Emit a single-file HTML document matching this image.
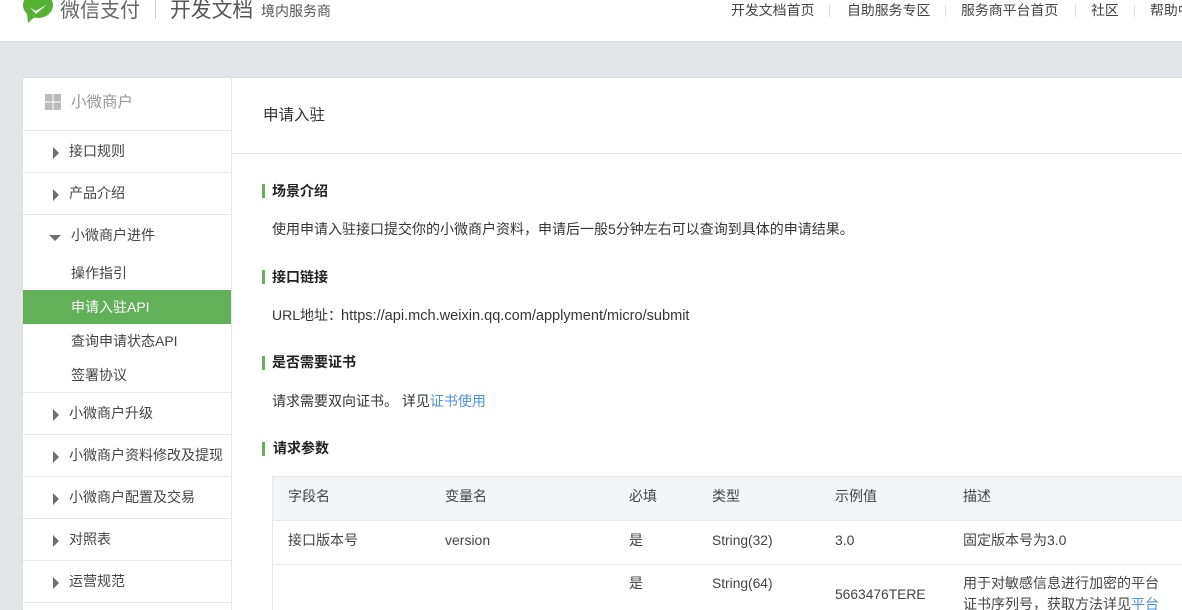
<!DOCTYPE html>
<html lang="zh-CN"><head><meta charset="utf-8"><style>
html,body{margin:0;padding:0;width:1182px;height:610px;overflow:hidden;background:#e4e5e9;}
body{position:relative;font-family:"Liberation Sans","Noto Sans CJK SC",sans-serif;color:#353535;font-size:14px;}
.t{position:absolute;white-space:nowrap;line-height:20px;height:20px;}
.b{position:absolute;}
.h{font-weight:700;color:#222;font-size:14px;}
.n{color:#444;}
.m{font-size:13.800px;}
.hl{background:#e6e7ea;height:1px;left:23px;width:208px;}
.a{position:absolute;left:53px;width:0;height:0;border-left:6px solid #6f6f6f;border-top:6px solid transparent;border-bottom:6px solid transparent;}
.g{position:absolute;left:262px;width:3px;height:14px;background:#62b159;}
a{color:#4a90e2;text-decoration:none;}
</style></head><body>
<div class="b" style="left:0;top:0;width:1182px;height:41px;background:#fff;border-bottom:1px solid #dcdde0;"></div>
<svg class="b" style="left:22px;top:0" width="32" height="24" viewBox="0 0 32 24"><ellipse cx="16" cy="5" rx="15" ry="13" fill="#55b132"/><path d="M5 14L6 23L13 16.500Z" fill="#55b132"/><path d="M8 7.500L13.500 11L25 4.500L14 14Z" fill="#fff"/></svg>
<span class="t" style="left:60px;top:-1px;font-size:20px;line-height:24px;height:24px;color:#666;">微信支付</span>
<div class="b" style="left:155px;top:0;width:1px;height:19px;background:#ccc;"></div>
<span class="t" style="left:170px;top:-1px;font-size:20.800px;line-height:24px;height:24px;color:#555;">开发文档</span>
<span class="t" style="left:261px;top:1px;font-size:14px;color:#555;">境内服务商</span>
<span class="t n" style="left:731px;top:0;font-size:13.900px;">开发文档首页</span>
<div class="b" style="left:829px;top:5px;width:1px;height:12px;background:#ddd;"></div>
<span class="t n" style="left:847px;top:0;font-size:13.900px;">自助服务专区</span>
<div class="b" style="left:945px;top:5px;width:1px;height:12px;background:#ddd;"></div>
<span class="t n" style="left:961px;top:0;font-size:13.900px;">服务商平台首页</span>
<div class="b" style="left:1075px;top:5px;width:1px;height:12px;background:#ddd;"></div>
<span class="t n" style="left:1091px;top:0;font-size:13.900px;">社区</span>
<div class="b" style="left:1134px;top:5px;width:1px;height:12px;background:#ddd;"></div>
<span class="t n" style="left:1150px;top:0;font-size:13.900px;">帮助中心</span>

<div class="b" style="left:22px;top:77px;width:1160px;height:533px;background:#fff;border-left:1px solid #dcdde0;border-top:1px solid #dcdde0;box-sizing:border-box;"></div>
<div class="b" style="left:231px;top:78px;width:1px;height:532px;background:#e6e7ea;"></div>
<div class="b" style="left:232px;top:153px;width:950px;height:1px;background:#e6e7ea;"></div>

<svg class="b" style="left:45px;top:94px" width="16" height="16"><rect width="7.500" height="7.500" fill="#bbb"/><rect x="8.500" width="7.500" height="7.500" fill="#bbb"/><rect y="8.500" width="7.500" height="7.500" fill="#bbb"/><rect x="8.500" y="8.500" width="7.500" height="7.500" fill="#bbb"/></svg>
<span class="t" style="left:71px;top:93px;font-size:15.500px;color:#999;">小微商户</span>

<div class="b hl" style="top:130px"></div><div class="b hl" style="top:172px"></div><div class="b hl" style="top:214px"></div><div class="b hl" style="top:392px"></div><div class="b hl" style="top:434px"></div><div class="b hl" style="top:476px"></div><div class="b hl" style="top:518px"></div><div class="b hl" style="top:560px"></div><div class="b hl" style="top:602px"></div>

<i class="a" style="top:147px"></i><span class="t n" style="left:69px;top:141px;">接口规则</span>
<i class="a" style="top:189px"></i><span class="t n" style="left:69px;top:183px;">产品介绍</span>
<i class="b" style="left:49px;top:235px;width:0;height:0;border-top:6px solid #6f6f6f;border-left:6px solid transparent;border-right:6px solid transparent;"></i>
<span class="t n" style="left:71px;top:225px;">小微商户进件</span>
<span class="t n" style="left:71px;top:263px;">操作指引</span>
<div class="b" style="left:23px;top:290px;width:208px;height:34px;background:#62b159;"></div>
<span class="t" style="left:71px;top:297px;color:#fff;">申请入驻API</span>
<span class="t n" style="left:71px;top:331px;">查询申请状态API</span>
<span class="t n" style="left:71px;top:365px;">签署协议</span>
<i class="a" style="top:409px"></i><span class="t n" style="left:69px;top:403px;">小微商户升级</span>
<i class="a" style="top:451px"></i><span class="t n" style="left:69px;top:445px;">小微商户资料修改及提现</span>
<i class="a" style="top:493px"></i><span class="t n" style="left:69px;top:487px;">小微商户配置及交易</span>
<i class="a" style="top:535px"></i><span class="t n" style="left:69px;top:529px;">对照表</span>
<i class="a" style="top:577px"></i><span class="t n" style="left:69px;top:571px;">运营规范</span>

<span class="t" style="left:263px;top:106px;font-size:15.500px;color:#333;">申请入驻</span>

<i class="g" style="top:184px"></i><span class="t h" style="left:272px;top:181px;">场景介绍</span>
<span class="t" style="left:272px;top:219px;">使用申请入驻接口提交你的小微商户资料，申请后一般5分钟左右可以查询到具体的申请结果。</span>
<i class="g" style="top:270px"></i><span class="t h" style="left:272px;top:267px;">接口链接</span>
<span class="t" style="left:272px;top:305px;">URL地址：<span style="font-size:14.550px;margin-left:-1px;">https://api.mch.weixin.qq.com/applyment/micro/submit</span></span>
<i class="g" style="top:356px"></i><span class="t h" style="left:272px;top:352px;">是否需要证书</span>
<span class="t" style="left:272px;top:391px;">请求需要双向证书。 详见<a>证书使用</a></span>
<i class="g" style="top:442px"></i><span class="t h" style="left:273px;top:438px;">请求参数</span>

<div class="b" style="left:272px;top:476px;width:910px;height:45px;background:#f3f4f8;border-top:1px solid #e6e7ea;border-bottom:1px solid #e6e7ea;box-sizing:border-box;"></div>
<div class="b" style="left:272px;top:476px;width:1px;height:134px;background:#e6e7ea;"></div>
<div class="b" style="left:272px;top:564px;width:910px;height:1px;background:#e6e7ea;"></div>

<span class="t n" style="left:288px;top:486px;">字段名</span>
<span class="t n" style="left:445px;top:486px;">变量名</span>
<span class="t n" style="left:629px;top:486px;">必填</span>
<span class="t n" style="left:712px;top:486px;">类型</span>
<span class="t n" style="left:835px;top:486px;">示例值</span>
<span class="t n" style="left:963px;top:486px;">描述</span>

<span class="t n" style="left:288px;top:530px;">接口版本号</span>
<span class="t n" style="left:445px;top:530px;">version</span>
<span class="t n" style="left:629px;top:530px;">是</span>
<span class="t n m" style="left:712px;top:531px;">String(32)</span>
<span class="t n" style="left:835px;top:530px;">3.0</span>
<span class="t n" style="left:963px;top:530px;">固定版本号为3.0</span>

<span class="t n" style="left:629px;top:573px;">是</span>
<span class="t n m" style="left:712px;top:574px;">String(64)</span>
<span class="t n m" style="left:835px;top:585px;">5663476TERE</span>
<span class="t n" style="left:963px;top:573px;">用于对敏感信息进行加密的平台</span>
<span class="t n" style="left:963px;top:594px;">证书序列号，获取方法详见<a>平台</a></span>
</body></html>
